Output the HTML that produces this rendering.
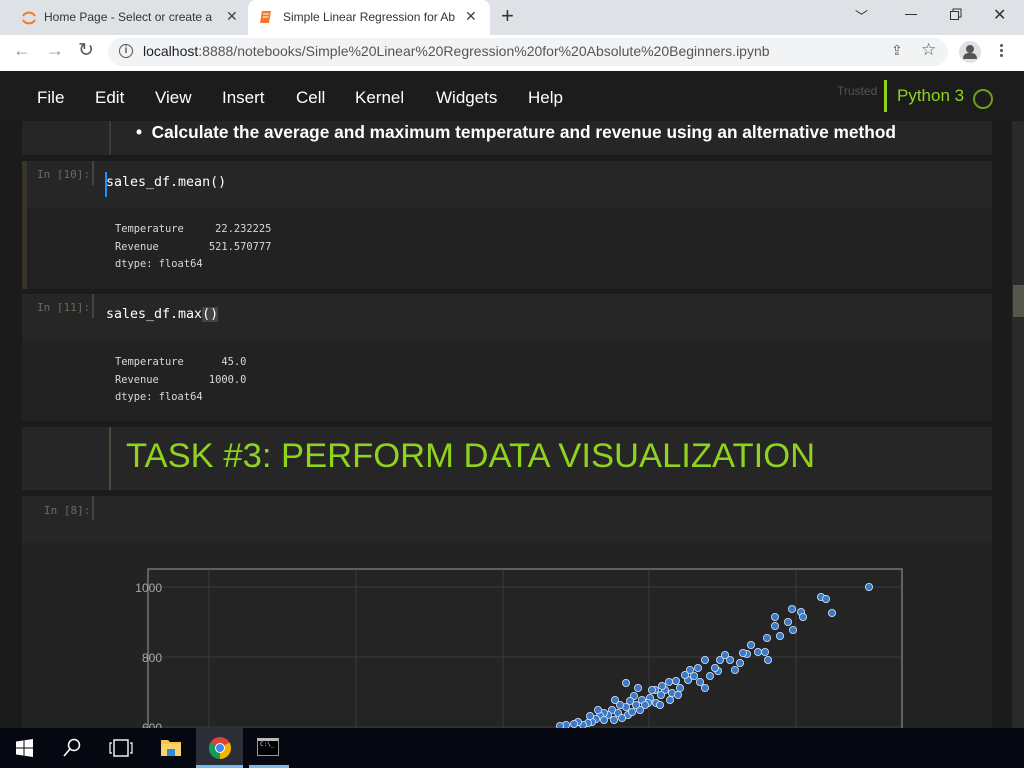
<!DOCTYPE html>
<html><head><meta charset="utf-8"><style>
*{margin:0;padding:0;box-sizing:border-box}
body{width:1024px;height:768px;overflow:hidden;background:#1b1b1b;font-family:"Liberation Sans",sans-serif;position:relative}
.a{position:absolute}
.mono{font-family:"DejaVu Sans Mono","Liberation Mono",monospace}
.menu span{position:absolute;top:88px;color:#fff;font-size:17px}
.prompt{color:#6e6a58;font-size:11px}
.out{color:#d8d8d8;font-size:10.4px;line-height:17.5px;white-space:pre}
</style></head><body>
<!-- tab bar -->
<div class="a" style="left:0;top:0;width:1024px;height:35px;background:#dee1e6"></div>
<div class="a" style="left:248px;top:0;width:242px;height:36px;background:#fff;border-radius:8px 8px 0 0"></div>
<svg class="a" style="left:20px;top:9px" width="18" height="18"><path d="M3 7 A7 7 0 0 1 15 7" stroke="#f37726" stroke-width="2" fill="none"/><path d="M3 11 A7 7 0 0 0 15 11" stroke="#f37726" stroke-width="2" fill="none"/></svg>
<div class="a" style="left:44px;top:10px;font-size:12px;color:#333;width:168px;overflow:hidden;white-space:nowrap">Home Page - Select or create a n</div>
<div class="a" style="left:226px;top:8px;font-size:14px;color:#444">✕</div>
<svg class="a" style="left:258px;top:9px" width="16" height="16"><path d="M4 2h9l-2 12H2z" fill="#f37726"/><path d="M5 5h6M4.5 8h6" stroke="#fff" stroke-width="1"/></svg>
<div class="a" style="left:283px;top:10px;font-size:12px;color:#333;width:172px;overflow:hidden;white-space:nowrap">Simple Linear Regression for Abs</div>
<div class="a" style="left:465px;top:8px;font-size:14px;color:#444">✕</div>
<div class="a" style="left:501px;top:3px;font-size:22px;color:#333">+</div>
<div class="a" style="left:855px;top:6px;font-size:13px;color:#333">﹀</div>
<div class="a" style="left:905px;top:14px;width:12px;height:1px;background:#333"></div>
<svg class="a" style="left:949px;top:7px" width="14" height="14"><rect x="1.5" y="4.5" width="8" height="8" fill="none" stroke="#333"/><path d="M4 4.5V2h8v8H9.5" fill="none" stroke="#333"/></svg>
<div class="a" style="left:993px;top:5px;font-size:16px;color:#333">✕</div>
<!-- address -->
<div class="a" style="left:0;top:35px;width:1024px;height:36px;background:#fff"></div>
<div class="a" style="left:13px;top:40px;font-size:18px;color:#999">←</div>
<div class="a" style="left:46px;top:40px;font-size:18px;color:#999">→</div>
<div class="a" style="left:78px;top:39px;font-size:19px;color:#555">↻</div>
<div class="a" style="left:108px;top:38px;width:840px;height:28px;background:#f1f3f4;border-radius:14px"></div>
<div class="a" style="left:119px;top:44px;width:14px;height:14px;border:1.6px solid #555;border-radius:50%;font-size:10px;line-height:11px;text-align:center;color:#555;font-weight:bold">i</div>
<div class="a" style="left:143px;top:43px;font-size:14px;color:#202124">localhost<span style="color:#555">:8888/notebooks/Simple%20Linear%20Regression%20for%20Absolute%20Beginners.ipynb</span></div>
<div class="a" style="left:891px;top:42px;font-size:14px;color:#555">⇪</div>
<div class="a" style="left:921px;top:40px;font-size:17px;color:#555">☆</div>
<div class="a" style="left:959px;top:41px;width:22px;height:22px;border-radius:50%;background:#dfe1e5"></div>
<div class="a" style="left:966px;top:45px;width:8px;height:8px;border-radius:50%;background:#555"></div>
<div class="a" style="left:963px;top:53px;width:14px;height:6px;border-radius:7px 7px 1px 1px;background:#555"></div>
<div class="a" style="left:1000px;top:44px;width:3px;height:3px;background:#555;border-radius:50%;box-shadow:0 5px 0 #555,0 10px 0 #555"></div>
<!-- jupyter menubar -->
<div class="a" style="left:0;top:71px;width:1024px;height:50px;background:#1c1c1c"></div>
<div class="menu">
<span style="left:37px">File</span><span style="left:95px">Edit</span><span style="left:155px">View</span><span style="left:222px">Insert</span><span style="left:296px">Cell</span><span style="left:355px">Kernel</span><span style="left:436px">Widgets</span><span style="left:528px">Help</span>
</div>
<div class="a" style="left:837px;top:84px;font-size:12px;color:#555">Trusted</div>
<div class="a" style="left:884px;top:80px;width:3px;height:32px;background:#8fd31e"></div>
<div class="a" style="left:897px;top:86px;font-size:17px;color:#8fd31e">Python 3</div>
<div class="a" style="left:973px;top:89px;width:20px;height:20px;border:2.5px solid #6d9d22;border-radius:50%"></div>
<!-- scrollbar -->
<div class="a" style="left:1012px;top:121px;width:12px;height:607px;background:#2a2a2a"></div>
<div class="a" style="left:1013px;top:285px;width:11px;height:32px;background:#555748"></div>
<!-- markdown cell top -->
<div class="a" style="left:22px;top:121px;width:970px;height:34px;background:#262626"></div>
<div class="a" style="left:109px;top:121px;width:2px;height:34px;background:#3a3a3a"></div>
<div class="a" style="left:136px;top:122px;font-size:17.3px;font-weight:bold;color:#fff">•&nbsp; Calculate the average and maximum temperature and revenue using an alternative method</div>
<!-- In[10] -->
<div class="a" style="left:22px;top:161px;width:970px;height:128px;background:#222"></div>
<div class="a" style="left:22px;top:161px;width:5px;height:128px;background:#383528"></div>
<div class="a" style="left:27px;top:161px;width:965px;height:47px;background:#262626"></div>
<div class="a" style="left:92px;top:161px;width:2px;height:24px;background:#444"></div>
<div class="a mono prompt" style="left:37px;top:168px">In [10]:</div>
<div class="a" style="left:105px;top:172px;width:2px;height:25px;background:#1e8fff"></div>
<div class="a mono" style="left:106px;top:175px;font-size:13.3px;color:#fff">sales_df.mean()</div>
<div class="a mono out" style="left:115px;top:221px">Temperature     22.232225
Revenue        521.570777
dtype: float64</div>
<!-- In[11] -->
<div class="a" style="left:22px;top:294px;width:970px;height:127px;background:#222"></div>
<div class="a" style="left:22px;top:294px;width:970px;height:47px;background:#262626"></div>
<div class="a" style="left:92px;top:294px;width:2px;height:24px;background:#444"></div>
<div class="a mono prompt" style="left:37px;top:301px">In [11]:</div>
<div class="a mono" style="left:106px;top:307px;font-size:13.3px;color:#fff">sales_df.max<span style="background:#444">()</span></div>
<div class="a mono out" style="left:115px;top:354px">Temperature      45.0
Revenue        1000.0
dtype: float64</div>
<!-- heading -->
<div class="a" style="left:22px;top:427px;width:970px;height:63px;background:#262626"></div>
<div class="a" style="left:109px;top:427px;width:2px;height:63px;background:#4a4a3c"></div>
<div class="a" style="left:126px;top:437px;font-size:34.6px;color:#8fd31e">TASK #3: PERFORM DATA VISUALIZATION</div>
<!-- In[8] -->
<div class="a" style="left:22px;top:496px;width:970px;height:240px;background:#232323"></div>
<div class="a" style="left:22px;top:496px;width:970px;height:46px;background:#262626"></div>
<div class="a" style="left:92px;top:496px;width:2px;height:24px;background:#444"></div>
<div class="a mono prompt" style="left:44px;top:504px">In [8]:</div>
<svg class="a" style="left:0;top:540px" width="1010" height="190">
<g transform="translate(0,-540)">
<rect x="148" y="569" width="754" height="170" fill="#242424" stroke="#888" stroke-width="1.2"/>
<g stroke="#3a3a3a" stroke-width="1">
<line x1="209" y1="570" x2="209" y2="740"/><line x1="356" y1="570" x2="356" y2="740"/><line x1="503" y1="570" x2="503" y2="740"/><line x1="649" y1="570" x2="649" y2="740"/><line x1="796" y1="570" x2="796" y2="740"/>
<line x1="149" y1="587" x2="901" y2="587"/><line x1="149" y1="657" x2="901" y2="657"/><line x1="149" y1="727" x2="901" y2="727"/>
</g>
<g fill="#aaa" font-size="12" font-family="Liberation Sans" text-anchor="end">
<text x="162" y="592">1000</text><text x="162" y="662">800</text><text x="162" y="732">600</text>
</g>
<g fill="#3a78c8" stroke="#dde6f5" stroke-width="0.8">
<circle cx="869" cy="587" r="3.6"/><circle cx="821" cy="597" r="3.6"/><circle cx="826" cy="599" r="3.6"/><circle cx="832" cy="613" r="3.6"/><circle cx="792" cy="609" r="3.6"/><circle cx="801" cy="612" r="3.6"/><circle cx="803" cy="617" r="3.6"/><circle cx="793" cy="630" r="3.6"/><circle cx="775" cy="617" r="3.6"/><circle cx="788" cy="622" r="3.6"/><circle cx="775" cy="626" r="3.6"/><circle cx="780" cy="636" r="3.6"/><circle cx="767" cy="638" r="3.6"/><circle cx="765" cy="652" r="3.6"/><circle cx="758" cy="652" r="3.6"/><circle cx="768" cy="660" r="3.6"/><circle cx="751" cy="645" r="3.6"/><circle cx="747" cy="654" r="3.6"/><circle cx="743" cy="653" r="3.6"/><circle cx="740" cy="663" r="3.6"/><circle cx="730" cy="660" r="3.6"/><circle cx="725" cy="655" r="3.6"/><circle cx="720" cy="660" r="3.6"/><circle cx="718" cy="671" r="3.6"/><circle cx="715" cy="668" r="3.6"/><circle cx="705" cy="660" r="3.6"/><circle cx="698" cy="668" r="3.6"/><circle cx="690" cy="670" r="3.6"/><circle cx="688" cy="680" r="3.6"/><circle cx="685" cy="675" r="3.6"/><circle cx="680" cy="688" r="3.6"/><circle cx="676" cy="681" r="3.6"/><circle cx="672" cy="693" r="3.6"/><circle cx="669" cy="682" r="3.6"/><circle cx="665" cy="690" r="3.6"/><circle cx="661" cy="695" r="3.6"/><circle cx="656" cy="703" r="3.6"/><circle cx="650" cy="698" r="3.6"/><circle cx="648" cy="703" r="3.6"/><circle cx="642" cy="700" r="3.6"/><circle cx="638" cy="688" r="3.6"/><circle cx="634" cy="696" r="3.6"/><circle cx="630" cy="701" r="3.6"/><circle cx="626" cy="707" r="3.6"/><circle cx="620" cy="705" r="3.6"/><circle cx="612" cy="710" r="3.6"/><circle cx="608" cy="715" r="3.6"/><circle cx="604" cy="713" r="3.6"/><circle cx="600" cy="716" r="3.6"/><circle cx="596" cy="719" r="3.6"/><circle cx="592" cy="722" r="3.6"/><circle cx="588" cy="723" r="3.6"/><circle cx="583" cy="725" r="3.6"/><circle cx="578" cy="722" r="3.6"/><circle cx="574" cy="724" r="3.6"/><circle cx="566" cy="725" r="3.6"/><circle cx="560" cy="726" r="3.6"/><circle cx="640" cy="710" r="3.6"/><circle cx="645" cy="705" r="3.6"/><circle cx="655" cy="690" r="3.6"/><circle cx="662" cy="686" r="3.6"/><circle cx="670" cy="700" r="3.6"/><circle cx="678" cy="695" r="3.6"/><circle cx="628" cy="715" r="3.6"/><circle cx="618" cy="713" r="3.6"/><circle cx="614" cy="720" r="3.6"/><circle cx="622" cy="718" r="3.6"/><circle cx="632" cy="712" r="3.6"/><circle cx="652" cy="690" r="3.6"/><circle cx="694" cy="676" r="3.6"/><circle cx="700" cy="682" r="3.6"/><circle cx="710" cy="676" r="3.6"/><circle cx="735" cy="670" r="3.6"/><circle cx="705" cy="688" r="3.6"/><circle cx="660" cy="705" r="3.6"/><circle cx="636" cy="705" r="3.6"/><circle cx="604" cy="720" r="3.6"/><circle cx="626" cy="683" r="3.6"/><circle cx="615" cy="700" r="3.6"/><circle cx="590" cy="716" r="3.6"/><circle cx="598" cy="710" r="3.6"/>
</g></g></svg>
<!-- taskbar -->
<div class="a" style="left:0;top:728px;width:1024px;height:40px;background:#050811"></div>
<svg class="a" style="left:16px;top:739px" width="18" height="18"><path d="M0 2.5L7.5 1.4V8.5H0zM8.5 1.2L17 0V8.5H8.5zM0 9.5H7.5V16.6L0 15.5zM8.5 9.5H17V18L8.5 16.8z" fill="#fff"/></svg>
<svg class="a" style="left:62px;top:738px" width="20" height="20"><circle cx="12" cy="7" r="5.5" fill="none" stroke="#fff" stroke-width="1.5"/><path d="M8 11L2 18" stroke="#fff" stroke-width="1.6"/></svg>
<svg class="a" style="left:109px;top:739px" width="24" height="18"><rect x="5" y="1" width="14" height="16" fill="none" stroke="#fff" stroke-width="1.4"/><path d="M3 4H1v10h2M21 4h2v10h-2" fill="none" stroke="#fff" stroke-width="1.2"/></svg>
<svg class="a" style="left:160px;top:737px" width="22" height="20"><path d="M1 3h7l2 2h11v14H1z" fill="#f4c44f"/><rect x="1" y="7" width="20" height="12" fill="#fad26a"/><rect x="7" y="12" width="8" height="7" fill="#2a8fd8"/></svg>
<div class="a" style="left:196px;top:728px;width:47px;height:40px;background:#2b2e36"></div>
<div class="a" style="left:196px;top:765px;width:47px;height:3px;background:#76b9ed"></div>
<svg class="a" style="left:208px;top:736px" width="24" height="24"><circle cx="12" cy="12" r="11" fill="#db4437"/><path d="M12 12L2.5 6.5A11 11 0 0 0 12 23z" fill="#0f9d58"/><path d="M12 12L12 23A11 11 0 0 0 21.5 6.5z" fill="#f4b400"/><circle cx="12" cy="12" r="5" fill="#fff"/><circle cx="12" cy="12" r="4" fill="#4285f4"/></svg>
<div class="a" style="left:249px;top:765px;width:40px;height:3px;background:#76b9ed"></div>
<div class="a" style="left:257px;top:738px;width:22px;height:18px;background:#000;border:1px solid #999;border-top:3px solid #bbb"></div>
<div class="a mono" style="left:260px;top:741px;font-size:6px;color:#ddd">C:\_</div>
</body></html>
